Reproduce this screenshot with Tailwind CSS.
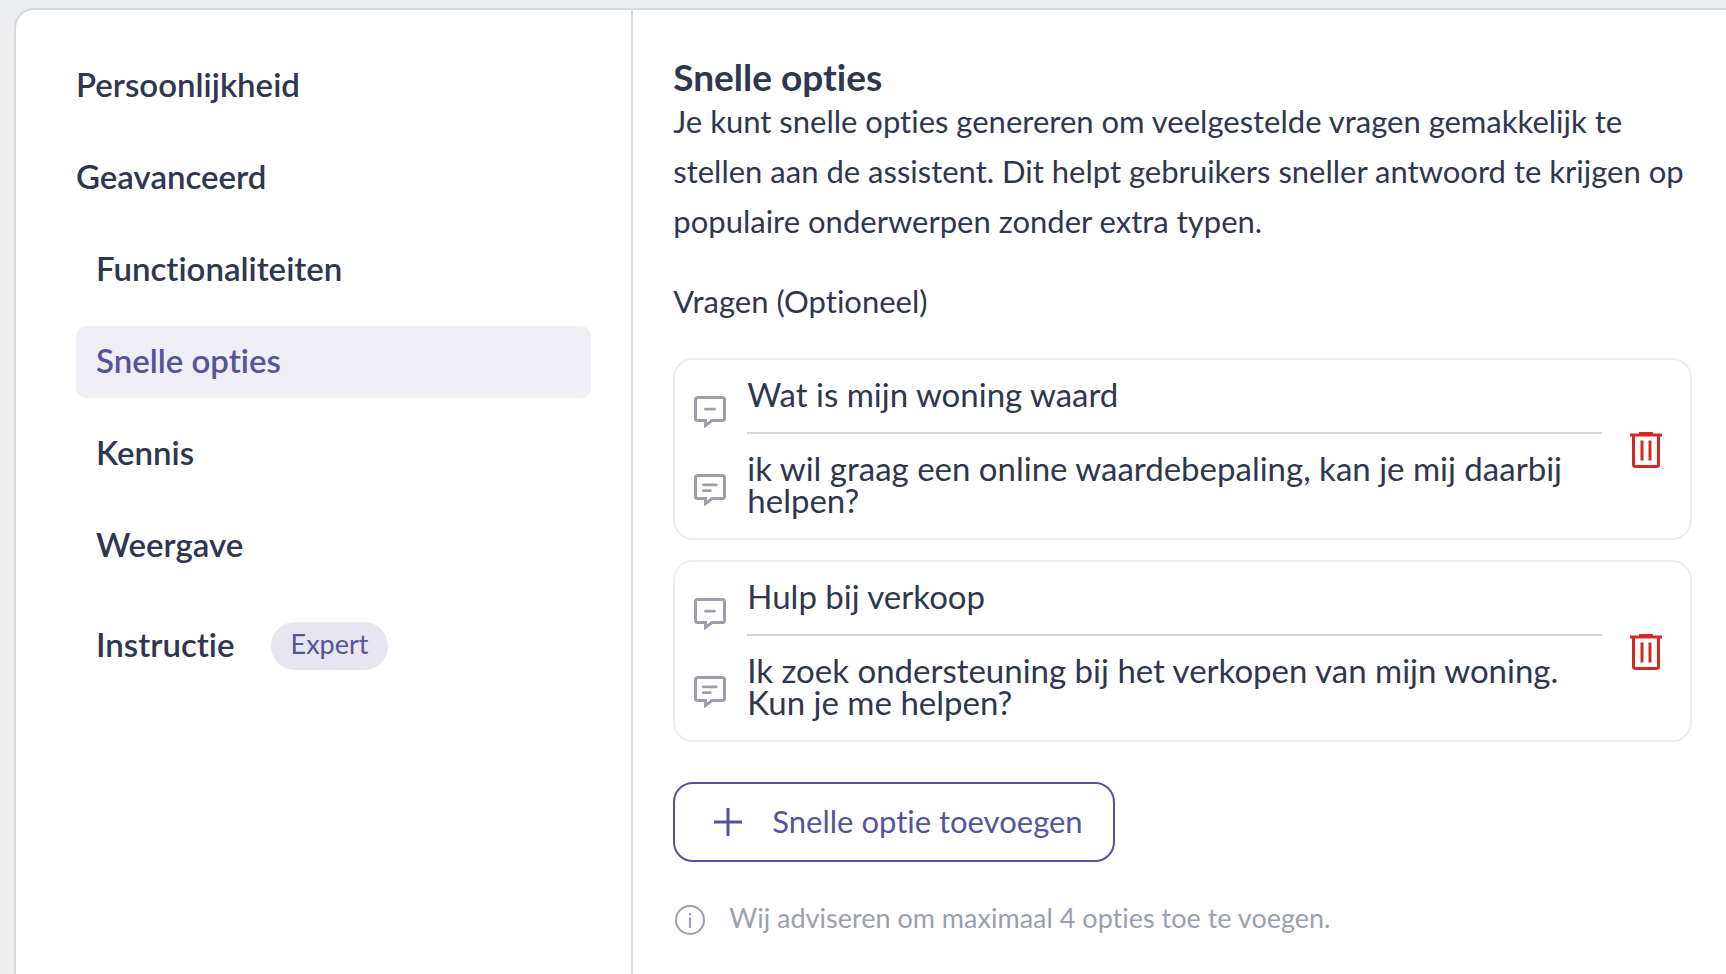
<!DOCTYPE html>
<html lang="nl">
<head>
<meta charset="utf-8">
<meta name="viewport" content="width=device-width, initial-scale=1">
<title>Snelle opties</title>
<script src="https://cdn.jsdelivr.net/npm/@tailwindcss/browser@4"></script>
</head>
<body class="bg-[#edeef0] font-['Lato','Noto_Sans',sans-serif] text-[#2f364d] [font-variant-ligatures:none]">
<svg class="hidden" aria-hidden="true">
  <symbol id="bubble" viewBox="0 0 32 32">
    <path d="M3.500 1.500h25a2 2 0 0 1 2 2v19a2 2 0 0 1-2 2H18L11.500 29.500v-5h-8a2 2 0 0 1-2-2v-19a2 2 0 0 1 2-2Z" fill="none" stroke="currentColor" stroke-width="3"/>
  </symbol>
  <symbol id="trash" viewBox="0 0 32 36">
    <path d="M0 3h32M9 1.500h14" fill="none" stroke="currentColor" stroke-width="3"/>
    <path d="M3.500 3v29.500a2 2 0 0 0 2 2h21a2 2 0 0 0 2-2V3M12 8.500v20M20 8.500v20" fill="none" stroke="currentColor" stroke-width="3"/>
  </symbol>
</svg>
<div class="min-h-screen pt-2 pl-3.5">
  <div class="flex min-h-[calc(100vh-8px)] rounded-tl-[20px] border-t-2 border-l-2 border-[#d7d7d7] bg-white">
    <nav class="w-[36.1%] shrink-0 border-r-2 border-[#d7d7d7] pt-10 pr-10 pl-15 text-[33px] leading-8 font-semibold" aria-label="Instellingen">
      <ul class="flex flex-col gap-5">
        <li><a href="#persoonlijkheid" class="block pt-[18px] pb-[22px]">Persoonlijkheid</a></li>
        <li><a href="#geavanceerd" class="block pt-[18px] pb-[22px]">Geavanceerd</a></li>
        <li><a href="#functionaliteiten" class="block px-5 pt-[18px] pb-[22px]">Functionaliteiten</a></li>
        <li><a href="#snelle-opties" aria-current="page" class="block rounded-[10px] bg-[#efeef4] px-5 pt-[18px] pb-[22px] text-[#55549b]">Snelle opties</a></li>
        <li><a href="#kennis" class="block px-5 pt-[18px] pb-[22px]">Kennis</a></li>
        <li><a href="#weergave" class="block px-5 pt-[18px] pb-[22px]">Weergave</a></li>
        <li><a href="#instructie" class="flex items-center gap-9 p-5"><span class="pb-1">Instructie</span> <span class="rounded-full bg-[#e6e5f0] px-5 pt-1.5 pb-2.5 text-[27px] font-normal text-[#55549b]">Expert</span></a></li>
      </ul>
    </nav>
    <main class="min-w-0 flex-1 pt-11 pr-8.5 pb-9 pl-10 text-[31px]">
      <h1 class="pt-1 text-[37px] leading-[38px] font-bold">Snelle opties</h1>
      <p class="leading-[50px]">Je kunt snelle opties genereren om veelgestelde vragen gemakkelijk te stellen aan de assistent. Dit helpt gebruikers sneller antwoord te krijgen op populaire onderwerpen zonder extra typen.</p>
      <h2 class="mt-[30px] leading-[50px]">Vragen (Optioneel)</h2>
      <ul class="mt-8 flex flex-col gap-5 text-[33px] leading-8">
        <li class="flex rounded-[20px] border-2 border-[#ededed] pr-7 pl-[19px]">
          <div class="flex flex-col gap-[46px] pt-9 text-[#9b9fac]">
            <svg class="size-8" aria-hidden="true"><use href="#bubble"/><path d="M11.500 13.200h9" stroke="currentColor" stroke-width="2.800" stroke-linecap="round"/></svg>
            <svg class="size-8" aria-hidden="true"><use href="#bubble"/><path d="M9.300 10.800h13M9.300 16.700h7" stroke="currentColor" stroke-width="2.800" stroke-linecap="round"/></svg>
          </div>
          <div class="ml-[21px] flex min-w-0 flex-1 flex-col">
            <input type="text" aria-label="Vraag 1" value="Wat is mijn woning waard" class="h-[74px] w-full border-b-2 border-[#d5d5d5] pb-1 outline-none">
            <textarea rows="2" aria-label="Bericht 1" class="mt-[18px] mb-2.5 block h-19 w-full resize-none overflow-hidden pb-3 outline-none">ik wil graag een online waardebepaling, kan je mij daarbij helpen?</textarea>
          </div>
          <button type="button" aria-label="Verwijder optie 1" class="ml-7 self-center pt-0.5 text-[#d12a20]"><svg class="h-9 w-8" aria-hidden="true"><use href="#trash"/></svg></button>
        </li>
        <li class="flex rounded-[20px] border-2 border-[#ededed] pr-7 pl-[19px]">
          <div class="flex flex-col gap-[46px] pt-9 text-[#9b9fac]">
            <svg class="size-8" aria-hidden="true"><use href="#bubble"/><path d="M11.500 13.200h9" stroke="currentColor" stroke-width="2.800" stroke-linecap="round"/></svg>
            <svg class="size-8" aria-hidden="true"><use href="#bubble"/><path d="M9.300 10.800h13M9.300 16.700h7" stroke="currentColor" stroke-width="2.800" stroke-linecap="round"/></svg>
          </div>
          <div class="ml-[21px] flex min-w-0 flex-1 flex-col">
            <input type="text" aria-label="Vraag 2" value="Hulp bij verkoop" class="h-[74px] w-full border-b-2 border-[#d5d5d5] pb-1 outline-none">
            <textarea rows="2" aria-label="Bericht 2" class="mt-[18px] mb-2.5 block h-19 w-full resize-none overflow-hidden pb-3 outline-none">Ik zoek ondersteuning bij het verkopen van mijn woning. Kun je me helpen?</textarea>
          </div>
          <button type="button" aria-label="Verwijder optie 2" class="ml-7 self-center pt-0.5 text-[#d12a20]"><svg class="h-9 w-8" aria-hidden="true"><use href="#trash"/></svg></button>
        </li>
      </ul>
      <button type="button" class="mt-10 flex h-20 items-center gap-[30px] rounded-[20px] border-2 border-[#55549b] pr-[30px] pl-[39px] text-[#55549b]">
        <svg class="size-7" viewBox="0 0 28 28" aria-hidden="true"><path d="M14 0v28M0 14h28" stroke="currentColor" stroke-width="3"/></svg>
        <span class="pb-0.5">Snelle optie toevoegen</span>
      </button>
      <p class="mt-10 flex items-center gap-6 pl-0.5 text-[27px] leading-8 text-[#9b9fac]">
        <svg class="size-[30px] shrink-0" viewBox="0 0 30 30" aria-hidden="true"><circle cx="15" cy="15" r="14" fill="none" stroke="currentColor" stroke-width="2"/><path d="M15 12.500v10.500" stroke="currentColor" stroke-width="2"/><circle cx="15" cy="9.300" r="1.300" fill="currentColor"/></svg>
        <span class="pb-1">Wij adviseren om maximaal 4 opties toe te voegen.</span>
      </p>
    </main>
  </div>
</div>
</body>
</html>
